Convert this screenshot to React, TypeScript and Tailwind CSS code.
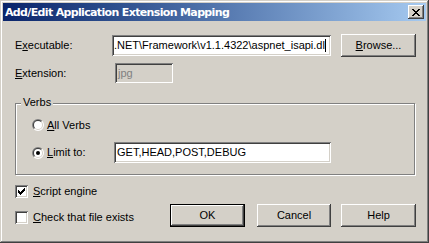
import React from "react";

const raised =
  "shadow-[inset_-1px_-1px_0_#404040,inset_1px_1px_0_#ffffff,inset_-2px_-2px_0_#808080]";
const sunken =
  "shadow-[inset_1px_1px_0_#808080,inset_-1px_-1px_0_#ffffff,inset_2px_2px_0_#404040,inset_-2px_-2px_0_#d4d0c8]";

function CloseGlyph() {
  const rows: [number, number][][] = [
    [[0, 2], [6, 2]],
    [[1, 2], [5, 2]],
    [[2, 4]],
    [[3, 2]],
    [[2, 4]],
    [[1, 2], [5, 2]],
    [[0, 2], [6, 2]],
  ];
  return (
    <svg width="8" height="7" viewBox="0 0 8 7" shapeRendering="crispEdges">
      {rows.map((r, y) =>
        r.map(([x, w], i) => <rect key={`${y}-${i}`} x={x} y={y} width={w} height={1} fill="#000" />)
      )}
    </svg>
  );
}

function CheckGlyph() {
  const pattern = [
    "......X",
    ".....XX",
    "X...XXX",
    "XX.XXX.",
    "XXXXX..",
    ".XXX...",
    "..X....",
  ];
  return (
    <svg width="7" height="7" viewBox="0 0 7 7" shapeRendering="crispEdges">
      {pattern.map((row, y) =>
        row.split("").map((c, x) =>
          c === "X" ? <rect key={`${x}-${y}`} x={x} y={y} width={1} height={1} fill="#000" /> : null
        )
      )}
    </svg>
  );
}

function Checkbox({ checked }: { checked: boolean }) {
  return (
    <div className={`w-[13px] h-[13px] bg-white flex items-center justify-center shrink-0 ${sunken}`}>
      {checked && <CheckGlyph />}
    </div>
  );
}

function Radio({ checked }: { checked: boolean }) {
  return (
    <svg width="12" height="12" viewBox="0 0 12 12" className="shrink-0">
      <path d="M1.757 10.243 A6 6 0 0 1 10.243 1.757 Z" fill="#808080" />
      <path d="M10.243 1.757 A6 6 0 0 1 1.757 10.243 Z" fill="#ffffff" />
      <path d="M2.464 9.536 A5 5 0 0 1 9.536 2.464 Z" fill="#404040" />
      <path d="M9.536 2.464 A5 5 0 0 1 2.464 9.536 Z" fill="#d4d0c8" />
      <circle cx="6" cy="6" r="4" fill="#ffffff" />
      {checked && <circle cx="6" cy="6" r="2" fill="#000" />}
    </svg>
  );
}

export default function App() {
  return (
    <div
      className={`w-[429px] h-[243px] bg-[#d4d0c8] p-[3px] flex flex-col font-['Liberation_Sans',Arial,sans-serif] text-[11px] leading-[13px] text-black shadow-[inset_-1px_-1px_0_#404040,inset_1px_1px_0_#d4d0c8,inset_-2px_-2px_0_#808080,inset_2px_2px_0_#ffffff]`}
    >
      {/* Title bar */}
      <div className="h-[18px] shrink-0 flex items-center bg-gradient-to-r from-[#0a246a] to-[#a6caf0] pl-[2px] pr-[2px]">
        <span className="font-bold text-white text-[11px] font-['DejaVu_Sans',sans-serif] tracking-[-0.65px]">
          Add/Edit Application Extension Mapping
        </span>
        <div className={`ml-auto w-[16px] h-[14px] bg-[#d4d0c8] flex items-center justify-center ${raised}`}>
          <CloseGlyph />
        </div>
      </div>

      {/* Body */}
      <div className="flex flex-col pl-[12px] pr-[10px]">
        {/* Executable */}
        <div className="mt-[13px] h-[23px] flex items-center">
          <span className="w-[97px] shrink-0">
            E<u>x</u>ecutable:
          </span>
          <div className={`w-[219px] h-[21px] bg-white flex items-center pl-[2px] pr-[2px] overflow-hidden whitespace-nowrap ${sunken}`}>
            <span className="whitespace-nowrap">{".NET\\Framework\\v1.1.4322\\aspnet_isapi.dl"}</span>
            <span className="w-[1px] h-[13px] bg-black shrink-0" />
          </div>
          <div className={`ml-[10px] w-[75px] h-[23px] flex items-center justify-center ${raised}`}>
            <span>
              <u>B</u>rowse...
            </span>
          </div>
        </div>

        {/* Extension */}
        <div className="mt-[6px] h-[20px] flex items-center">
          <span className="w-[100px] shrink-0">
            <u>E</u>xtension:
          </span>
          <div className={`w-[58px] h-[20px] bg-[#d4d0c8] flex items-center pl-[3px] text-[#808080] ${sunken}`}>
            jpg
          </div>
        </div>

        {/* Verbs group */}
        <div className="mt-[20px] relative w-[400px] h-[72px] border border-[#808080] shadow-[inset_1px_1px_0_#ffffff,1px_1px_0_#ffffff] pl-[16px] pt-[13px] flex flex-col">
          <span className="absolute left-[5px] top-[-8px] px-[2px] bg-[#d4d0c8] h-[13px] leading-[13px]">Verbs</span>
          <div className="h-[16px] flex items-center">
            <Radio checked={false} />
            <span className="ml-[3px]">
              <u>A</u>ll Verbs
            </span>
          </div>
          <div className="mt-[9px] h-[21px] flex items-center">
            <div className="w-[82px] shrink-0 flex items-center">
              <Radio checked={true} />
              <span className="ml-[3px]">
                <u>L</u>imit to:
              </span>
            </div>
            <div className={`w-[217px] h-[21px] bg-white flex items-center pl-[3px] ${sunken}`}>
              GET,HEAD,POST,DEBUG
            </div>
          </div>
        </div>

        {/* Script engine */}
        <div className="mt-[10px] h-[13px] flex items-center">
          <Checkbox checked={true} />
          <span className="ml-[5px]">
            <u>S</u>cript engine
          </span>
        </div>

        {/* Check file exists + buttons */}
        <div className="mt-[6px] h-[23px] flex items-start">
          <div className="mt-[7px] flex items-center">
            <Checkbox checked={false} />
            <span className="ml-[5px]">
              <u>C</u>heck that file exists
            </span>
          </div>
          <div className="ml-auto flex items-center">
            <div className="w-[75px] h-[23px] flex items-center justify-center shadow-[inset_0_0_0_1px_#000000,inset_-2px_-2px_0_#404040,inset_2px_2px_0_#ffffff,inset_-3px_-3px_0_#808080]">
              OK
            </div>
            <div className={`ml-[12px] w-[74px] h-[23px] flex items-center justify-center ${raised}`}>Cancel</div>
            <div className={`ml-[10px] w-[75px] h-[23px] flex items-center justify-center ${raised}`}>Help</div>
          </div>
        </div>
      </div>
    </div>
  );
}
